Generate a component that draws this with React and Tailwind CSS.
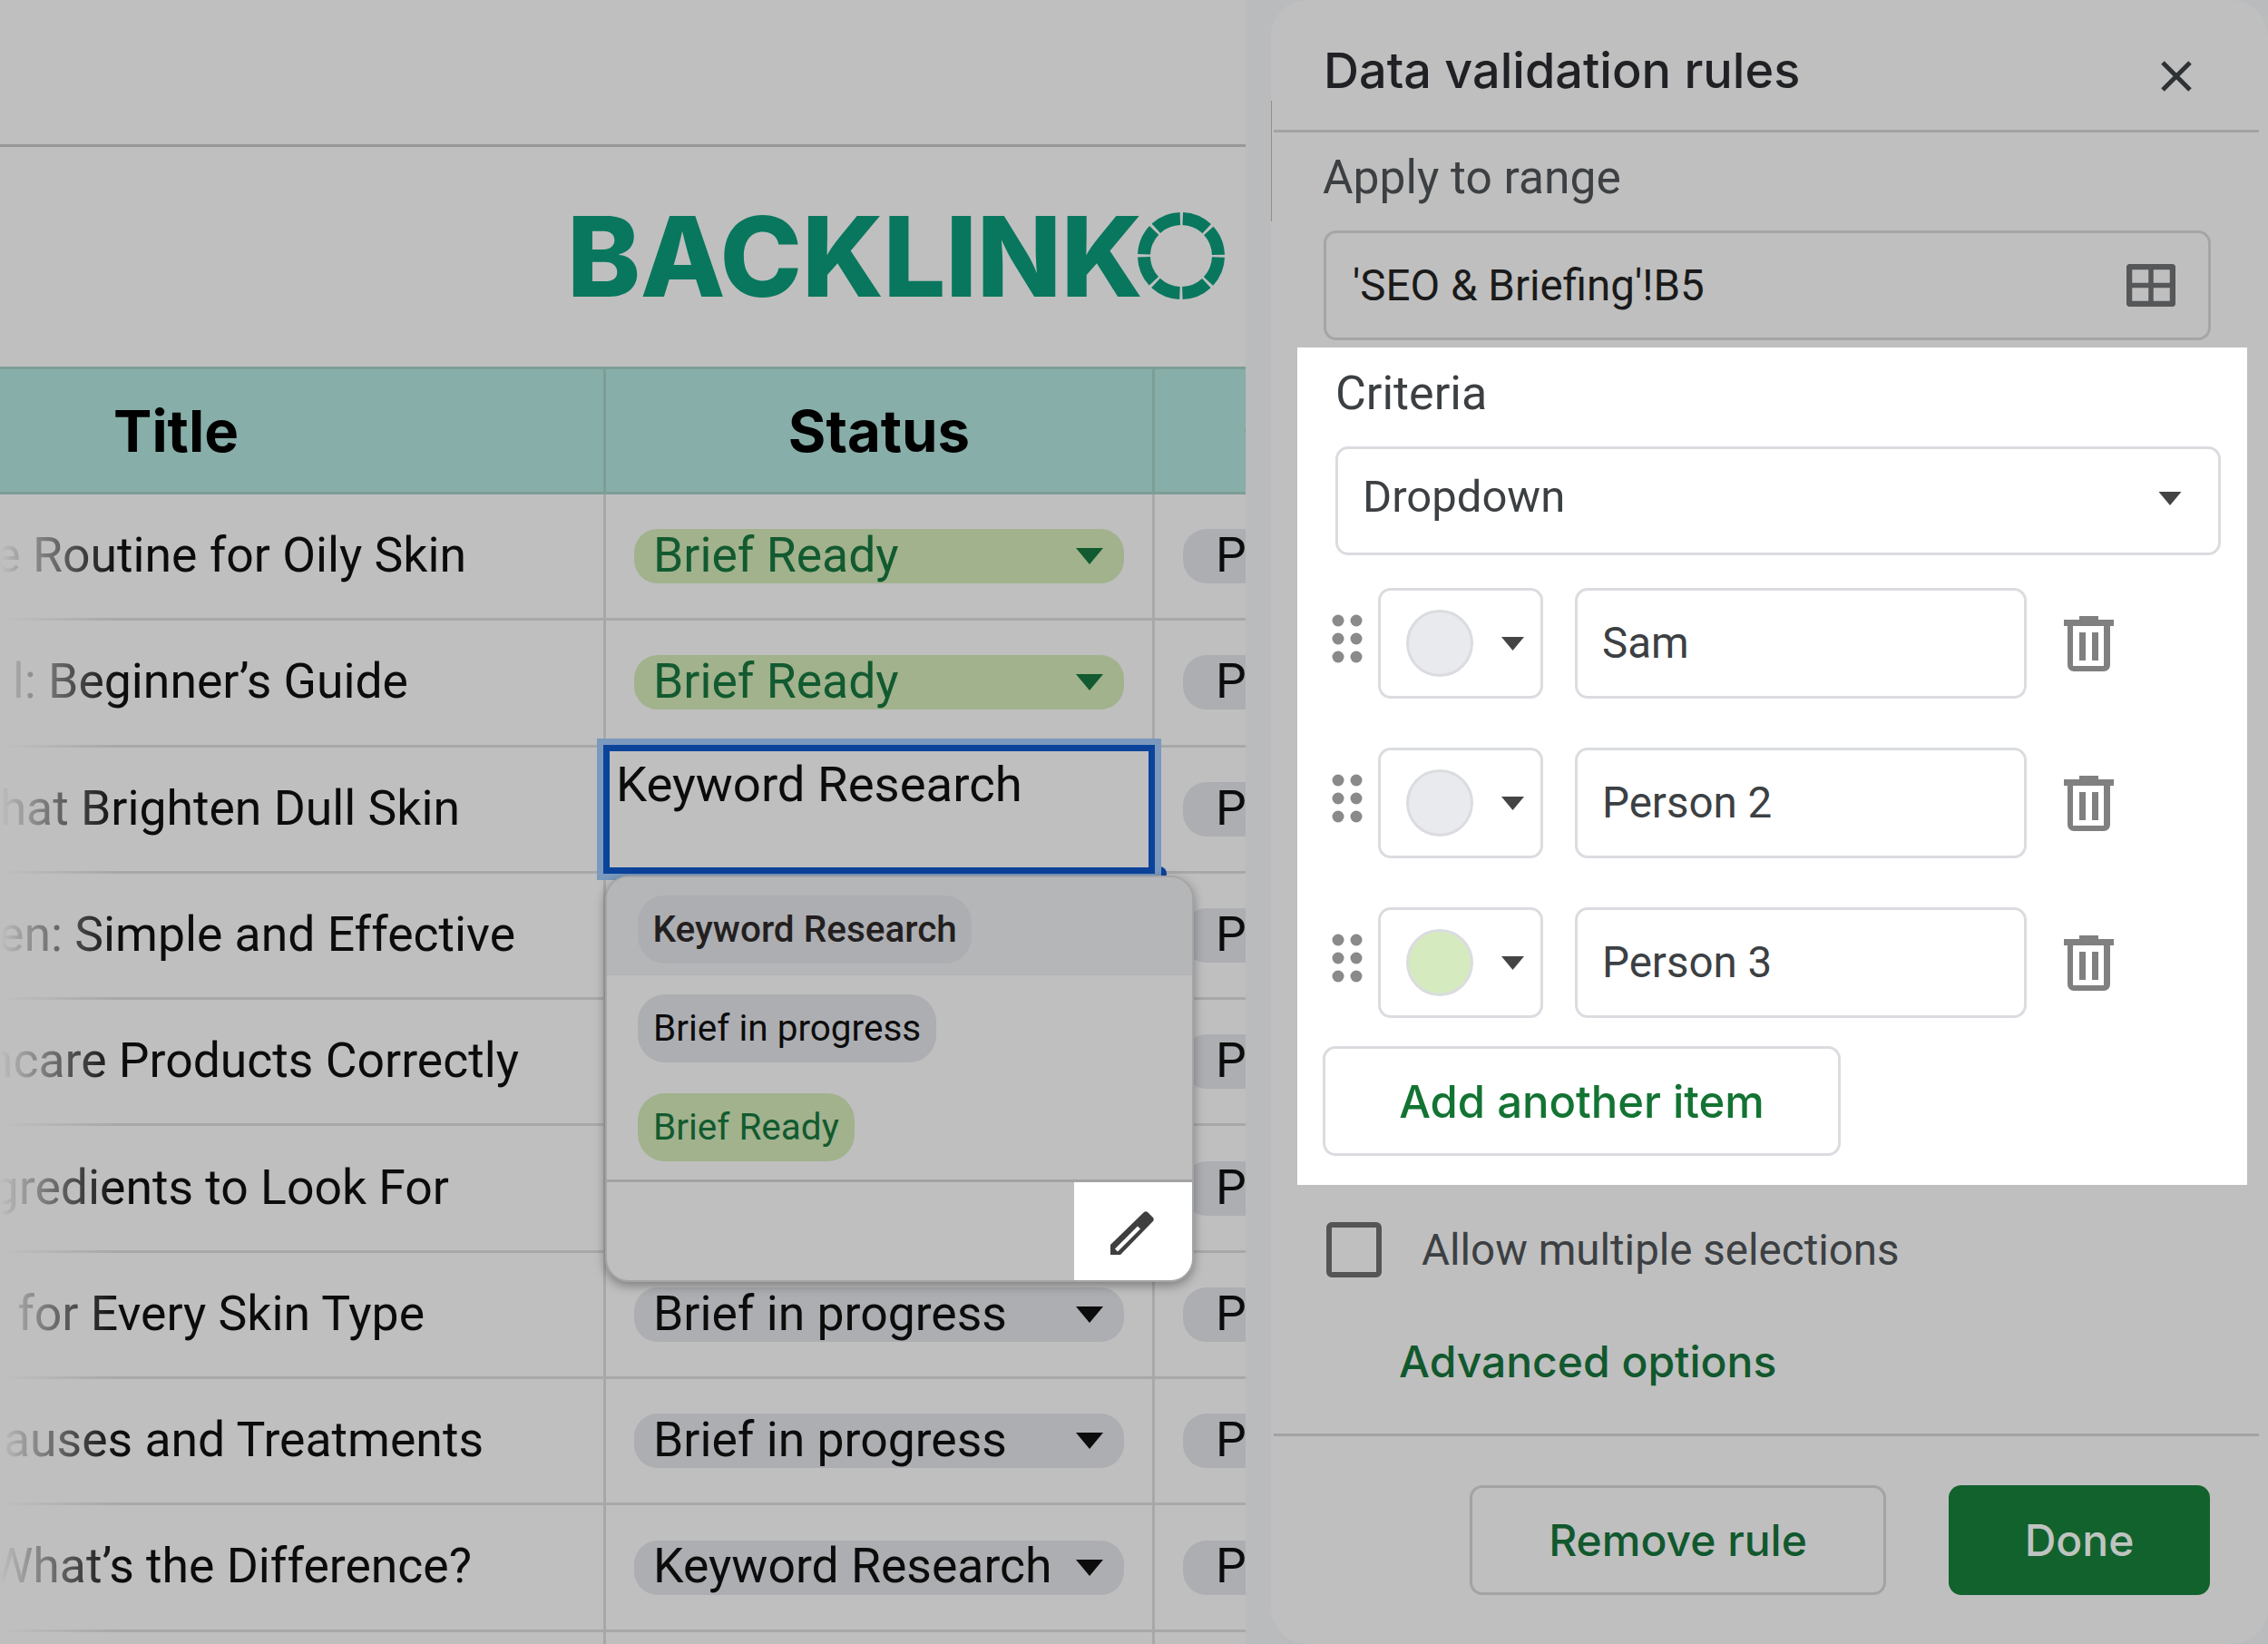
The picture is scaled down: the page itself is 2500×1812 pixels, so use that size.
const ROWS = [
  { t: "e Routine for Oily Skin", pr: "pr-[151px]", s: "ready" },
  { t: "l: Beginner’s Guide", pr: "pr-[215px]", s: "ready" },
  { t: "hat Brighten Dull Skin", pr: "pr-[158px]", s: "none" },
  { t: "en: Simple and Effective", pr: "pr-[97px]", s: "none" },
  { t: "ncare Products Correctly", pr: "pr-[93px]", s: "none" },
  { t: "Ingredients to Look For", pr: "pr-[170px]", s: "none" },
  { t: "for Every Skin Type", pr: "pr-[197px]", s: "Brief in progress" },
  { t: "Causes and Treatments", pr: "pr-[132px]", s: "Brief in progress" },
  { t: "What’s the Difference?", pr: "pr-[145px]", s: "Keyword Research" },
  { t: "", pr: "pr-[144px]", s: "none" },
];

function Tri({ className, fill }) {
  return (
    <svg viewBox="0 0 30 18" className={className} aria-hidden="true">
      <polygon points="0,0 30,0 15,18" fill={fill} />
    </svg>
  );
}

function Ring() {
  return (
    <svg viewBox="0 0 96 96" className="w-[96px] h-[96px] shrink-0 -ml-[5px] -mt-[2px]" aria-hidden="true">
      <circle cx="48" cy="48" r="41" fill="none" stroke="#08775d" strokeWidth="14" strokeDasharray="29.2 3" strokeDashoffset="-1.5" />
    </svg>
  );
}

function Trash() {
  return (
    <svg viewBox="0 0 55 61" className="w-[55px] h-[61px] shrink-0" aria-hidden="true">
      <g fill="#808080">
        <rect x="17" y="0" width="21" height="5" />
        <rect x="0" y="4" width="55" height="7" />
        <path d="M4 10h47v44a7 7 0 0 1-7 7H11a7 7 0 0 1-7-7zM10 11v44h34V11z" fillRule="evenodd" />
        <rect x="17" y="18" width="7" height="31" />
        <rect x="31" y="18" width="7" height="31" />
      </g>
    </svg>
  );
}

function Dots() {
  return (
    <svg viewBox="0 0 34 54" className="w-[34px] h-[54px] shrink-0 -mt-[11px]" aria-hidden="true">
      <g fill="#8a8a8a">
        <circle cx="7" cy="7" r="6.5" /><circle cx="27" cy="7" r="6.5" />
        <circle cx="7" cy="27" r="6.5" /><circle cx="27" cy="27" r="6.5" />
        <circle cx="7" cy="47" r="6.5" /><circle cx="27" cy="47" r="6.5" />
      </g>
    </svg>
  );
}

function Item({ label, circle, mt }) {
  return (
    <div className={`flex items-center ml-[38px] ${mt}`}>
      <Dots />
      <div className="ml-[17px] w-[182px] h-[122px] border-[3px] border-[#dadce0] rounded-[14px] flex items-center pl-[28px] shrink-0">
        <div className={`w-[74px] h-[74px] rounded-full border-[3px] border-[#dadce0] ${circle}`} />
        <Tri className="w-[27px] h-[15px] ml-[30px]" fill="#444444" />
      </div>
      <div className="ml-[35px] w-[498px] h-[122px] border-[3px] border-[#dadce0] rounded-[14px] flex items-center pl-[27px] pt-[2px] text-[47.500px] text-[#3c4043] shrink-0">
        {label}
      </div>
      <div className="ml-[41px]"><Trash /></div>
    </div>
  );
}

function Pill({ s }) {
  if (s === "none") return null;
  const ready = s === "ready";
  return (
    <div className={`w-[540px] h-[60px] rounded-[26px] flex items-center justify-between pl-[21px] pr-[22px] ${ready ? "bg-[#a1b28d] text-[#125a2f]" : "bg-[#adaeb2] text-[#0c0c0c]"}`}>
      <span className="pb-[2px]">{ready ? "Brief Ready" : s}</span>
      <Tri className="w-[32px] h-[18px]" fill={ready ? "#125a2f" : "#0c0c0c"} />
    </div>
  );
}

function Sheet() {
  return (
    <div className="relative w-[1373px] h-[1812px] shrink-0 overflow-hidden bg-[#bfbfbf] text-[53.500px] text-[#0c0c0c]">
      <div className="h-[162px] border-b-[3px] border-[#979797]" />
      <div className="h-[242px] flex items-center pl-[625px]">
        <span className="font-['Inter',sans-serif] font-extrabold text-[122px] leading-none tracking-[-0.4px] text-[#08775d] whitespace-nowrap">BACKLINK</span>
        <Ring />
      </div>
      <div className="h-[141px] flex bg-[#87aea8] border-y-[3px] border-[#7c9e97] text-black font-bold text-[63.500px] font-['Inter',sans-serif]">
        <div className="w-[668px] shrink-0 border-r-[3px] border-[#7c9e97] flex items-center pl-[125px]">Title</div>
        <div className="w-[605px] shrink-0 border-r-[3px] border-[#7c9e97] flex items-center justify-center">Status</div>
        <div className="flex-1 flex items-center pl-[97px] whitespace-nowrap">Owner</div>
      </div>
      {ROWS.map((r, i) => (
        <div key={i} className="h-[139.3px] flex border-b-[3px] border-[#a8a8a8]">
          <div className={`w-[668px] shrink-0 border-r-[3px] border-[#a8a8a8] flex items-center justify-end overflow-hidden whitespace-nowrap pb-[2px] ${r.pr}`}>{r.t}</div>
          <div className="w-[605px] shrink-0 border-r-[3px] border-[#a8a8a8] flex items-center pl-[31px]"><Pill s={r.s} /></div>
          <div className="flex-1 flex items-center pl-[31px]">
            {i < 9 && <div className="w-[120px] h-[60px] rounded-[26px] bg-[#adaeb2] pl-[36px] pb-[2px] flex items-center shrink-0">P</div>}
          </div>
        </div>
      ))}

      <div className="absolute left-0 top-[547px] bottom-0 w-[130px] bg-gradient-to-r from-[#bfbfbf] to-transparent pointer-events-none" />

      <div className="absolute left-[1270px] top-[955px] w-[16px] h-[16px] rounded-full bg-[#0b439b]" />
      <div className="absolute left-[658px] top-[814px] w-[622px] h-[156px] border-[7px] border-[#7a99bd] text-[54.500px]">
        <div className="w-full h-full border-[7px] border-[#0b439b] pl-[7px] pt-[4px] leading-[64px]">Keyword Research</div>
      </div>

      <div className="absolute left-[667px] top-[965px] w-[649px] h-[448px] rounded-[26px] bg-[#bfbfbf] border-[2px] border-[#a5a5a5] shadow-[0_4px_12px_rgba(0,0,0,0.35)] overflow-hidden text-[40.500px] flex flex-col">
        <div className="h-[108px] bg-[#b5b6b8] pl-[34px] pt-[20px] shrink-0">
          <div className="w-fit h-[75px] rounded-[30px] bg-[#adaeb2] px-[16.500px] flex items-center font-medium text-[#231f20]">Keyword Research</div>
        </div>
        <div className="pl-[34px] pt-[21px] shrink-0">
          <div className="w-fit h-[75px] rounded-[30px] bg-[#adaeb2] px-[17px] flex items-center">Brief in progress</div>
        </div>
        <div className="pl-[34px] pt-[34px] shrink-0">
          <div className="w-fit h-[75px] rounded-[30px] bg-[#a1b28d] px-[17px] flex items-center text-[#125a2f]">Brief Ready</div>
        </div>
        <div className="mt-[20px] flex-1 border-t-[3px] border-[#a3a3a3] flex justify-end">
          <div className="w-[130px] bg-white flex items-center justify-center">
            <svg viewBox="0 0 48 48" className="w-[48px] h-[48px] mt-[4px] -ml-[3px]" aria-hidden="true">
              <path d="M0 48V37L37 1Q39-.5 41 1L47 7Q48.500 9 47 11L11 48Z" fill="#3f3f3f" />
              <path d="M5 41.500L30 16.500 33 19.500 8 44.500Z" fill="#ffffff" />
            </svg>
          </div>
        </div>
      </div>
    </div>
  );
}

function Panel() {
  return (
    <div className="relative ml-[28px] w-[1099px] h-[1812px] rounded-[40px] bg-[#bfbfbf] text-[#3c4043] text-[47.500px] overflow-hidden">
      <div className="absolute left-0 top-[111px] w-[1px] h-[133px] bg-[#8f8f8f]" />
      <div className="h-[143px] flex items-center justify-between pl-[58px] pr-[83px]">
        <span className="font-['Inter',sans-serif] font-medium text-[54px] text-[#202124] mt-[11px]">Data validation rules</span>
        <svg viewBox="0 0 36 36" className="w-[36px] h-[36px] mt-[24px]" aria-hidden="true">
          <path d="M3 3l30 30M33 3L3 33" stroke="#2f3235" strokeWidth="5" fill="none" />
        </svg>
      </div>
      <div className="ml-[3px] mr-[10px] h-[3px] bg-[#a3a3a3]" />
      <div className="ml-[57px] mt-[25px] leading-[50px] text-[51.500px]">Apply to range</div>
      <div className="ml-[58px] mt-[33px] w-[978px] h-[121px] border-[3px] border-[#a5a5a5] rounded-[14px] flex items-center justify-between pl-[29px] pr-[36px] text-[#1a1a1a]">
        <span className="pt-[2px]">'SEO &amp; Briefing'!B5</span>
        <svg viewBox="0 0 54 47" className="w-[54px] h-[47px]" aria-hidden="true">
          <rect x="3" y="3" width="48" height="41" rx="1" fill="none" stroke="#565758" strokeWidth="6.500" />
          <path d="M27 3v41M3 23.500h48" fill="none" stroke="#565758" strokeWidth="5.500" />
        </svg>
      </div>
      <div className="ml-[29px] mt-[8px] w-[1047px] h-[923px] bg-white pt-[26px] flex flex-col">
        <div className="ml-[42px] leading-[50px] text-[52px]">Criteria</div>
        <div className="ml-[42px] mt-[33px] w-[976px] h-[120px] border-[3px] border-[#dadce0] rounded-[14px] flex items-center justify-between pl-[27px] pr-[39px] shrink-0">
          <span className="text-[49px] pb-[8px]">Dropdown</span>
          <Tri className="w-[28px] h-[15px] -mt-[6px]" fill="#444444" />
        </div>
        <Item label="Sam" circle="bg-[#e8eaed]" mt="mt-[36px]" />
        <Item label="Person 2" circle="bg-[#e8eaed]" mt="mt-[54px]" />
        <Item label="Person 3" circle="bg-[#d5ebbf]" mt="mt-[54px]" />
        <div className="ml-[28px] mt-[31px] w-[571px] h-[121px] shrink-0 border-[3px] border-[#dadce0] rounded-[14px] flex items-center justify-center pt-[2px] font-medium text-[#137333] font-['Inter',sans-serif] text-[49px]">
          Add another item
        </div>
      </div>
      <div className="flex items-center h-[61px] ml-[61px] mt-[41px]">
        <div className="w-[61px] h-[61px] border-[6px] border-[#555555] rounded-[6px]" />
        <span className="ml-[44px] pt-[2px]">Allow multiple selections</span>
      </div>
      <div className="ml-[141px] mt-[68px] leading-[50px] font-medium text-[#11582e] font-['Inter',sans-serif] text-[48px]">Advanced options</div>
      <div className="ml-[3px] mr-[10px] mt-[54px] h-[3px] bg-[#a3a3a3]" />
      <div className="mt-[54px] flex justify-end gap-[69px] pr-[64px] font-medium font-['Inter',sans-serif] text-[48px]">
        <div className="w-[459px] h-[121px] border-[3px] border-[#a3a3a3] rounded-[14px] flex items-center justify-center text-[#11582e]">Remove rule</div>
        <div className="w-[288px] h-[121px] rounded-[14px] bg-[#12622e] flex items-center justify-center text-[#bfc4c0]">Done</div>
      </div>
    </div>
  );
}

export default function App() {
  return (
    <div className="flex w-[2500px] h-[1812px] overflow-hidden bg-[#babbbc] font-['Roboto',sans-serif]">
      <Sheet />
      <Panel />
    </div>
  );
}
